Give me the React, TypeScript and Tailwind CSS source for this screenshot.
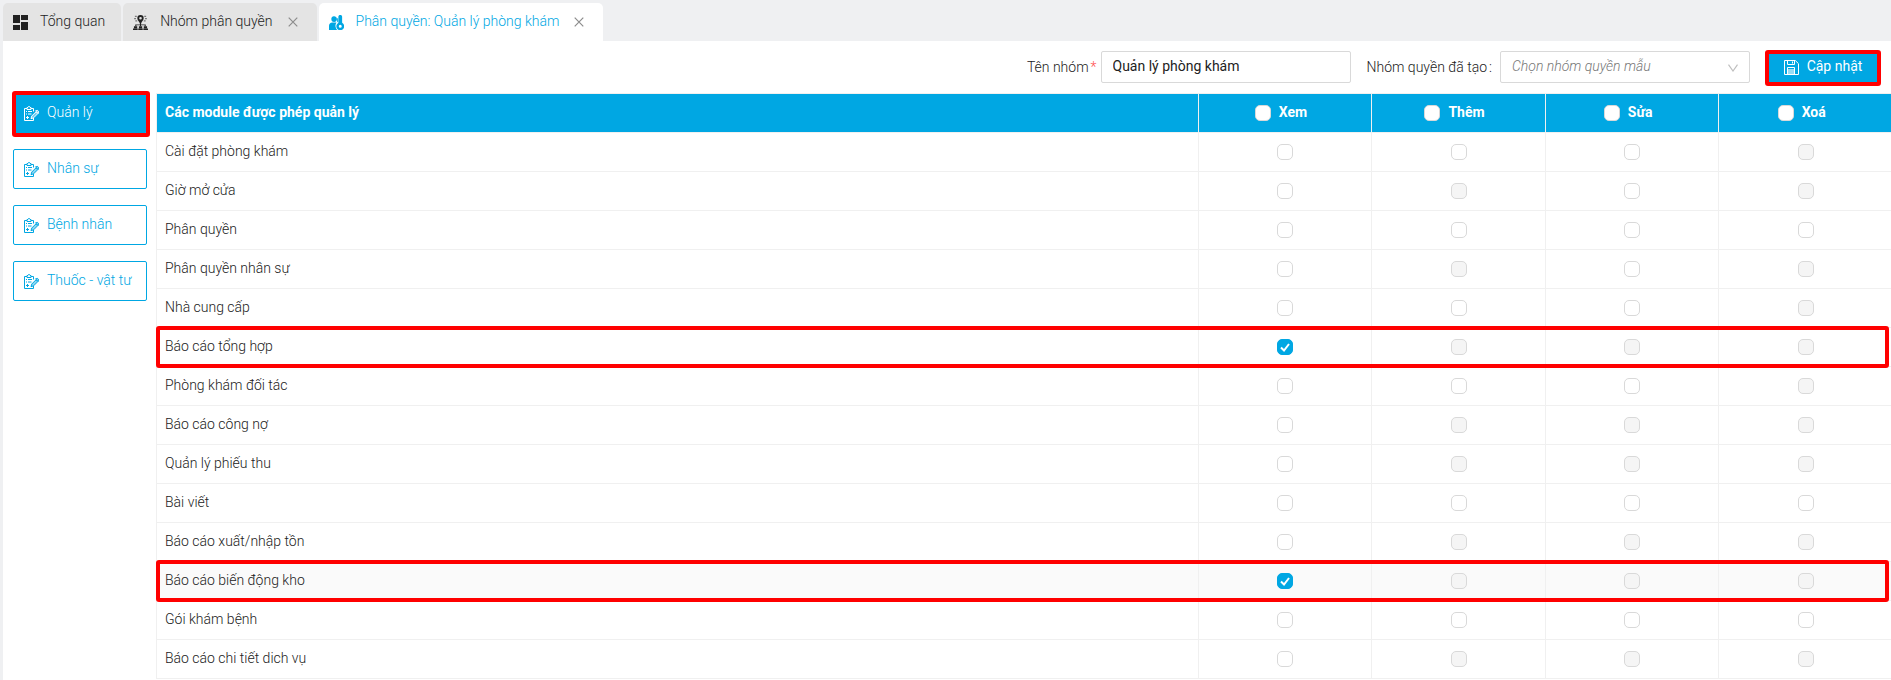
import type { ReactNode } from "react";
import { useState } from "react";

const PERMISSIONS = ["Xem", "Thêm", "Sửa", "Xoá"];

type Row = { name: string; enabled: number[]; checked?: boolean; marked?: boolean; hovered?: boolean };

const ROWS: Row[] = [
  { name: "Cài đặt phòng khám", enabled: [1, 1, 1, 0] },
  { name: "Giờ mở cửa", enabled: [1, 0, 1, 0] },
  { name: "Phân quyền", enabled: [1, 1, 1, 1] },
  { name: "Phân quyền nhân sự", enabled: [1, 0, 1, 0] },
  { name: "Nhà cung cấp", enabled: [1, 1, 1, 0] },
  { name: "Báo cáo tổng hợp", enabled: [1, 0, 0, 0], checked: true, marked: true },
  { name: "Phòng khám đối tác", enabled: [1, 1, 1, 0] },
  { name: "Báo cáo công nợ", enabled: [1, 0, 0, 0] },
  { name: "Quản lý phiếu thu", enabled: [1, 0, 0, 0] },
  { name: "Bài viết", enabled: [1, 1, 1, 1] },
  { name: "Báo cáo xuất/nhập tồn", enabled: [1, 0, 0, 0] },
  { name: "Báo cáo biến động kho", enabled: [1, 0, 0, 0], checked: true, marked: true, hovered: true },
  { name: "Gói khám bệnh", enabled: [1, 1, 1, 1] },
  { name: "Báo cáo chi tiết dich vụ", enabled: [1, 0, 0, 0] },
];

const SECTIONS = ["Quản lý", "Nhân sự", "Bệnh nhân", "Thuốc - vật tư"];

function DashboardIcon() {
  return (
    <svg viewBox="0 0 15 15" className="size-[15px] shrink-0" fill="#222" aria-hidden="true">
      <path d="M0 0h7v8H0zM8 0h7v5H8zM0 10h7v5H0zM8 7h7v8H8z" />
    </svg>
  );
}

function RolesIcon() {
  return (
    <svg viewBox="0 0 16 16" className="size-[15px] shrink-0" fill="#222" aria-hidden="true">
      <path fillRule="evenodd" d="M8 0a3.4 3.4 0 0 1 3.4 3.4C11.4 5.5 9 7 8.6 9H7.4C7 7 4.6 5.5 4.6 3.4A3.400 3.400 0 0 1 8 0zm0 2a1.400 1.400 0 1 0 0 2.800A1.400 1.400 0 0 0 8 2z" />
      <path fill="#777" d="M2 .8h2v1.400H2zM12 .8h2v1.400h-2zM1.200 3.200h2v1.400h-2zM12.800 3.200h2v1.400h-2zM2.500 5.500h2v1.400h-2zM11.500 5.500h2v1.400h-2z" />
      <path d="M7.400 8h1.200v2h5v2h-1.200v-1H8.600v1H7.400v-1H3.600v1H2.400v-2h5z" />
      <path d="M1 12h3.500v2H1zM6.300 12h3.500v2H6.300zM11.500 12H15v2h-3.500zM0 14.500h5V16H0zM5.600 14.500h4.800V16H5.600zM11 14.500h5V16h-5z" />
    </svg>
  );
}

function UserGroupIcon() {
  return (
    <svg viewBox="0 0 16 16" className="size-[15px] shrink-0" fill="#00a7e3" aria-hidden="true">
      <path d="M2.500 4.500A3 3 0 0 1 8.500 4c0 2-.9 3.500-3 3.500s-3-1.500-3-3z" />
      <path d="M0 16v-4.500C0 9.300 1.500 8.300 3.500 8H8c-.9 1.500-1.300 3-1 4.500.2 1.400.8 2.500 1.700 3.500z" />
      <path fillRule="evenodd" d="M10 1.800C10 .7 10.800 0 12 0s2 .7 2 1.800v6.500A4.200 4.200 0 1 1 9.700 8.500l.3-.3zM12 10.500a1.600 1.600 0 1 0 0 3.200 1.600 1.600 0 0 0 0-3.200z" />
      <path d="M8.700 3.500h1V7l-1 1z" />
    </svg>
  );
}

function ClipboardIcon() {
  return (
    <svg viewBox="0 0 15 15" className="size-[15px] shrink-0" fill="none" stroke="currentColor" aria-hidden="true">
      <path d="M3 2.500H.5v12h9V12M7 2.500h2.500v3M3 3.500v-2h1l.5-1h1l.5 1h1v2z" />
      <path d="M2 5.500h1M4 5.500h4M2 8h1M4 8h3.500M2 11.500h3M3.500 10v3" />
      <path d="M7 12.700l.8-2.700 4-4 1.800 1.800-4 4zM11.500 4.800l2.700 2.700.3-2.200-.8-.8z" fill="currentColor" fillOpacity=".45" />
    </svg>
  );
}

function SaveIcon() {
  return (
    <svg viewBox="0 0 15 15" className="size-[15px] shrink-0" fill="none" stroke="currentColor" aria-hidden="true">
      <path d="M.5.5h10.800l3.200 3.200v10.800H.5z" />
      <path d="M3.500.5v4h7v-4M8.500 1.500v2M3.500 14.500v-7h7v7" />
      <path d="M4 9h6v5H4z" fill="currentColor" stroke="none" opacity=".6" />
    </svg>
  );
}

function CloseIcon() {
  return (
    <svg viewBox="0 0 10 10" className="size-[10px]" stroke="#8c8c8c" strokeWidth="1.200" aria-hidden="true">
      <path d="M.7.7l8.600 8.600M9.300.7L.7 9.300" />
    </svg>
  );
}

function Tab({ icon, label, active, closable }: { icon: ReactNode; label: string; active?: boolean; closable?: boolean }) {
  return (
    <div className={`flex h-[38px] items-center rounded-t-[5px] pl-[10px] ${closable ? "pr-[19px]" : "pr-4"} ${active ? "bg-white text-[#00a7e3]" : "bg-[#e4e4e4] text-[#222]"}`}>
      <a href="#" className="flex items-center gap-3">
        {icon}
        <span className="pb-[2px] leading-5">{label}</span>
      </a>
      {closable && (
        <button type="button" aria-label={`Đóng ${label}`} className="ml-[15px]">
          <CloseIcon />
        </button>
      )}
    </div>
  );
}

function Tick({ label, disabled, initial = false }: { label: string; disabled?: boolean; initial?: boolean }) {
  const [on, setOn] = useState(initial);
  return (
    <span className="relative inline-flex size-4">
      <input
        type="checkbox"
        aria-label={label}
        checked={on}
        disabled={disabled}
        onChange={() => setOn(!on)}
        className="size-4 appearance-none rounded-[5px] border border-[#d9d9d9] bg-white checked:border-[#00a7e3] checked:bg-[#00a7e3] disabled:bg-[#f5f5f5]"
      />
      {on && (
        <svg viewBox="0 0 16 16" className="pointer-events-none absolute inset-0 size-4" fill="none" stroke="#fff" strokeWidth="2" aria-hidden="true">
          <path d="M4 8.500l3 3 5-6.500" />
        </svg>
      )}
    </span>
  );
}

export default function App() {
  return (
    <div className="min-h-screen bg-[#eff0f2] pl-[3px] pt-[3px] font-['Roboto',sans-serif] text-sm font-light text-[#222]">
      <nav className="flex gap-[2px]">
        <Tab icon={<DashboardIcon />} label="Tổng quan" />
        <Tab icon={<RolesIcon />} label="Nhóm phân quyền" closable />
        <Tab icon={<UserGroupIcon />} label="Phân quyền: Quản lý phòng khám" active closable />
      </nav>

      <main className="min-h-[639px] overflow-hidden bg-white">
        <form className="flex h-[52px] items-center justify-end pr-[13px]" onSubmit={(e) => e.preventDefault()}>
          <label htmlFor="group-name" className="mr-1">
            Tên nhóm<span className="ml-[2px] text-[#ff4d4f]">*</span>
          </label>
          <input
            id="group-name"
            defaultValue="Quản lý phòng khám"
            className="mr-4 h-8 w-[250px] rounded-[2px] border border-[#d9d9d9] px-[11px] pb-[2px] font-normal text-[#222] outline-none"
          />
          <label htmlFor="group-template" className="mr-2">
            Nhóm quyền đã tạo<span className="ml-[2px]">:</span>
          </label>
          <div className="relative mr-[18px]">
            <select
              id="group-template"
              defaultValue=""
              className="h-8 w-[250px] appearance-none rounded-[2px] border border-[#d9d9d9] bg-white px-[11px] pb-[2px] italic text-[#777] outline-none"
            >
              <option value="">Chọn nhóm quyền mẫu</option>
            </select>
            <svg viewBox="0 0 10 8" className="pointer-events-none absolute right-3 top-[13px] h-2 w-[10px]" fill="none" stroke="#bfbfbf" strokeWidth="1.200" aria-hidden="true">
              <path d="M.5.7L5 7 9.500.7" />
            </svg>
          </div>
          <button type="submit" className="relative flex h-8 w-[110px] items-center justify-center gap-2 bg-[#00a7e3] font-normal text-white">
            <SaveIcon />
            <span className="pb-[2px]">Cập nhật</span>
            <span className="pointer-events-none absolute -inset-x-[3px] -bottom-[3px] -top-px rounded-[3px] border-4 border-[#ff0000]" />
          </button>
        </form>

        <div className="flex items-start gap-[9px]">
          <aside className="flex w-36 shrink-0 flex-col gap-4 pl-[10px]">
            {SECTIONS.map((section, i) => (
              <button
                key={section}
                type="button"
                className={`relative flex h-10 items-center gap-2 rounded-[2px] border border-[#00a7e3] pl-[10px] ${i === 0 ? "bg-[#00a7e3] text-white" : "bg-white text-[#00a7e3]"}`}
              >
                <ClipboardIcon />
                <span className="pb-[2px]">{section}</span>
                {i === 0 && <span className="pointer-events-none absolute -bottom-[5px] -left-[2px] -right-1 -top-[3px] rounded-[3px] border-4 border-[#ff0000]" />}
              </button>
            ))}
          </aside>

          <table className="-mr-[2px] grow table-fixed border-separate border-spacing-0 border-l border-t border-[#f0f0f0]">
            <thead>
              <tr className="h-[39px] bg-[#00a7e3] font-bold text-white">
                <th scope="col" className="w-[60%] border-b border-r border-[#f0f0f0] px-2 pb-[2px] pt-0 text-left font-bold">
                  Các module được phép quản lý
                </th>
                {PERMISSIONS.map((p) => (
                  <th key={p} scope="col" className="w-[10%] border-b border-r border-[#f0f0f0] p-0 font-bold">
                    <div className="flex items-center justify-center gap-2 pr-2">
                      <Tick label={`Chọn tất cả ${p}`} />
                      <span className="pb-[2px]">{p}</span>
                    </div>
                  </th>
                ))}
              </tr>
            </thead>
            <tbody>
              {ROWS.map((row) => (
                <tr key={row.name} className={`relative h-[39px] ${row.hovered ? "bg-[#fafafa]" : "bg-white"}`}>
                  <td className="border-b border-r border-[#f0f0f0] px-2 pb-[2px] pt-0">
                    {row.name}
                    {row.marked && <span className="pointer-events-none absolute -bottom-px -left-px -top-[2px] right-1 z-10 rounded-[3px] border-4 border-[#ff0000]" />}
                  </td>
                  {row.enabled.map((enabled, i) => (
                    <td key={PERMISSIONS[i]} className="border-b border-r border-[#f0f0f0] p-0">
                      <div className="flex items-center justify-center">
                        <Tick label={`${PERMISSIONS[i]} ${row.name}`} disabled={!enabled} initial={row.checked && i === 0} />
                      </div>
                    </td>
                  ))}
                </tr>
              ))}
            </tbody>
          </table>
        </div>
      </main>
    </div>
  );
}
